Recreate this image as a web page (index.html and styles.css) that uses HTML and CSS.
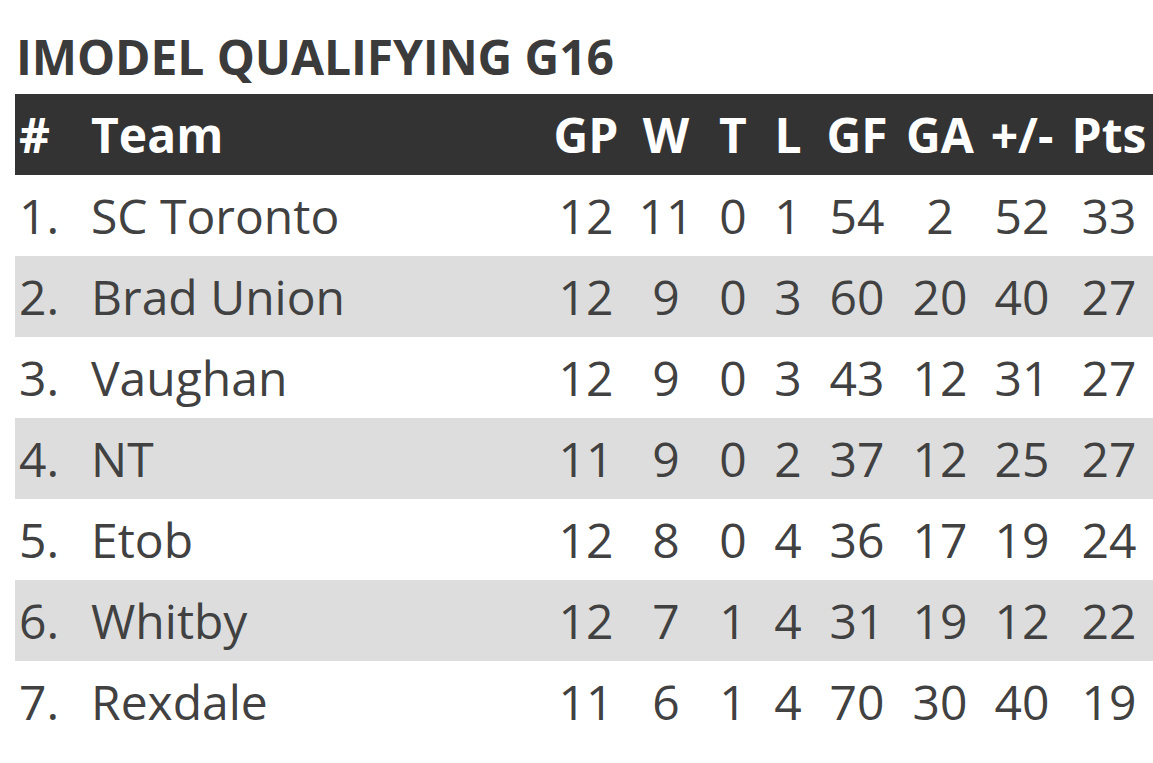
FILE: index.html
```html
<!DOCTYPE html>
<html lang="en">
<head>
<meta charset="utf-8">
<title>IMODEL QUALIFYING G16</title>
<link rel="stylesheet" href="styles.css">
</head>
<body>
<main class="standings">
  <h1 class="standings-title">IMODEL QUALIFYING G16</h1>
  <table class="standings-table">
    <colgroup>
      <col class="col-rank">
      <col class="col-team">
      <col class="col-gp">
      <col class="col-w">
      <col class="col-t">
      <col class="col-l">
      <col class="col-gf">
      <col class="col-ga">
      <col class="col-diff">
      <col class="col-pts">
    </colgroup>
    <thead>
      <tr>
        <th class="rank">#</th>
        <th class="team">Team</th>
        <th>GP</th>
        <th>W</th>
        <th>T</th>
        <th>L</th>
        <th>GF</th>
        <th>GA</th>
        <th>+/-</th>
        <th>Pts</th>
      </tr>
    </thead>
    <tbody>
      <tr><td class="rank">1.</td><td class="team">SC Toronto</td><td>12</td><td>11</td><td>0</td><td>1</td><td>54</td><td>2</td><td>52</td><td>33</td></tr>
      <tr><td class="rank">2.</td><td class="team">Brad Union</td><td>12</td><td>9</td><td>0</td><td>3</td><td>60</td><td>20</td><td>40</td><td>27</td></tr>
      <tr><td class="rank">3.</td><td class="team">Vaughan</td><td>12</td><td>9</td><td>0</td><td>3</td><td>43</td><td>12</td><td>31</td><td>27</td></tr>
      <tr><td class="rank">4.</td><td class="team">NT</td><td>11</td><td>9</td><td>0</td><td>2</td><td>37</td><td>12</td><td>25</td><td>27</td></tr>
      <tr><td class="rank">5.</td><td class="team">Etob</td><td>12</td><td>8</td><td>0</td><td>4</td><td>36</td><td>17</td><td>19</td><td>24</td></tr>
      <tr><td class="rank">6.</td><td class="team">Whitby</td><td>12</td><td>7</td><td>1</td><td>4</td><td>31</td><td>19</td><td>12</td><td>22</td></tr>
      <tr><td class="rank">7.</td><td class="team">Rexdale</td><td>11</td><td>6</td><td>1</td><td>4</td><td>70</td><td>30</td><td>40</td><td>19</td></tr>
    </tbody>
  </table>
</main>
</body>
</html>
```

FILE: styles.css
```css
html, body {
  margin: 0;
  padding: 0;
  background: #ffffff;
  overflow: hidden;
}

body {
  font-family: "Open Sans", "Liberation Sans", sans-serif;
  color: #414141;
}

.standings {
  padding: 25px 0 0 15px;
}

.standings-title {
  margin: 0 0 5px 0;
  padding-left: 1px;
  font-size: 48px;
  line-height: 64px;
  font-weight: 700;
  color: #3b3b3b;
  letter-spacing: -0.1px;
}

.standings-table {
  width: 1138px;
  table-layout: fixed;
  border-collapse: collapse;
  border-spacing: 0;
  font-size: 48px;
}

.col-rank { width: 74px; }
.col-team { width: 454px; }
.col-gp { width: 86px; }
.col-w { width: 74px; }
.col-t { width: 60px; }
.col-l { width: 50px; }
.col-gf { width: 88px; }
.col-ga { width: 78px; }
.col-diff { width: 86px; }
.col-pts { width: 88px; }

.standings-table th,
.standings-table td {
  height: 81px;
  padding: 0;
  line-height: 81px;
  text-align: center;
  white-space: nowrap;
  vertical-align: middle;
}

.standings-table thead tr {
  background: #333333;
}

.standings-table th {
  color: #ffffff;
  font-weight: 700;
}

.standings-table td {
  font-weight: 400;
}

.standings-table tbody tr:nth-child(even) {
  background: #dddddd;
}

.standings-table .rank {
  text-align: left;
  padding-left: 4px;
}

.standings-table .team {
  text-align: left;
  padding-left: 2px;
}
```
